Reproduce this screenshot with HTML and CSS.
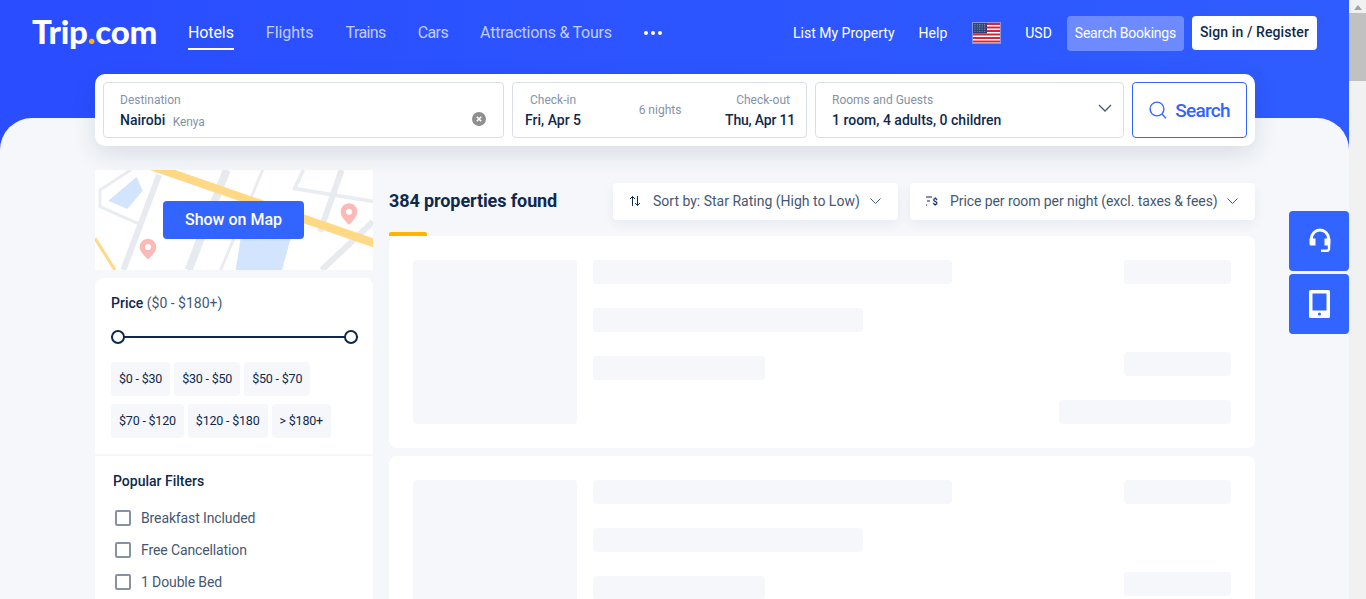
FILE: index.html
```html
<!DOCTYPE html>
<html lang="en">
<head>
    <meta charset="UTF-8">
    <meta name="viewport" content="width=device-width, initial-scale=1.0">
    <title>Trip.com Hotels</title>
    <link rel="stylesheet" href="styles.css">
</head>
<body>
<div id="page">
    <div id="main">
        <header id="hero">
            <div class="topbar">
                <a class="logo">Trip<span class="logo-dot">.</span>com</a>
                <nav class="nav">
                    <a class="nav-item active">Hotels</a>
                    <a class="nav-item nav-wide">Flights</a>
                    <a class="nav-item nav-tight">Trains</a>
                    <a class="nav-item nav-tight">Cars</a>
                    <a class="nav-item">Attractions &amp; Tours</a>
                    <span class="nav-more"><i></i><i></i><i></i></span>
                </nav>
                <div class="account">
                    <a class="account-link">List My Property</a>
                    <a class="account-link">Help</a>
                    <svg class="flag" viewBox="0 0 29 22" width="29" height="22">
                        <defs>
                            <pattern id="stars" width="2.4" height="2.2" patternUnits="userSpaceOnUse">
                                <rect width="1.100" height="1.100" fill="#8e93b8"/>
                            </pattern>
                        </defs>
                        <rect width="29" height="22" fill="#fff"/>
                        <rect y="1" width="29" height="2" fill="#d0293b"/>
                        <rect y="4.5" width="29" height="2" fill="#d0293b"/>
                        <rect y="8" width="29" height="2" fill="#d0293b"/>
                        <rect y="11.5" width="29" height="2" fill="#d0293b"/>
                        <rect y="15" width="29" height="2" fill="#d0293b"/>
                        <rect y="18.5" width="29" height="2" fill="#d0293b"/>
                        <rect x="0.5" y="0.5" width="14.500" height="11" fill="#2f3f72"/>
                        <rect x="1.500" y="1.500" width="12.500" height="9" fill="url(#stars)"/>
                        <rect x="0.5" y="0.5" width="28" height="21" fill="none" stroke="#8a93e0"/>
                    </svg>
                    <a class="account-link">USD</a>
                    <a class="btn-bookings">Search Bookings</a>
                    <a class="btn-signin">Sign in / Register</a>
                </div>
            </div>
            <form class="searchbox">
                <div class="field field-dest">
                    <span class="field-label">Destination</span>
                    <span class="field-value">Nairobi <small>Kenya</small></span>
                    <svg class="clear-icon" viewBox="0 0 14 14" width="14" height="14">
                        <circle cx="7" cy="7" r="7" fill="#8f8f8f"/>
                        <path d="M4.800 4.800l4.400 4.400M9.200 4.800l-4.400 4.400" stroke="#fff" stroke-width="1.600"/>
                    </svg>
                </div>
                <div class="field field-date">
                    <div class="date-col">
                        <span class="field-label">Check-in</span>
                        <span class="field-value">Fri, Apr 5</span>
                    </div>
                    <span class="nights">6 nights</span>
                    <div class="date-col date-end">
                        <span class="field-label">Check-out</span>
                        <span class="field-value">Thu, Apr 11</span>
                    </div>
                </div>
                <div class="field field-rooms">
                    <span class="field-label">Rooms and Guests</span>
                    <span class="field-value">1 room, 4 adults, 0 children</span>
                    <svg class="rooms-caret" viewBox="0 0 14 8" width="14" height="8">
                        <path d="M1 1l6 6 6-6" fill="none" stroke="#455873" stroke-width="1.300"/>
                    </svg>
                </div>
                <button class="btn-search" type="button">
                    <svg viewBox="0 0 18 18" width="18" height="18">
                        <circle cx="8" cy="8" r="6.900" fill="none" stroke="#3264ff" stroke-width="1.400"/>
                        <path d="M13 13l4 4.400" stroke="#3264ff" stroke-width="1.400"/>
                    </svg>
                    Search
                </button>
            </form>
        </header>

        <div id="sheet">
            <div class="layout">
                <aside class="sidebar">
                    <div class="map">
                        <svg class="map-art" viewBox="15 30 834 300" width="278" height="100">
                            <rect x="15" y="30" width="834" height="300" fill="#fff"/>
                            <path d="M122 30L30 90v50l122 54" fill="none" stroke="#e9ecf1" stroke-width="9"/>
                            <path d="M207 45L100 330" fill="none" stroke="#e7eaef" stroke-width="18"/>
                            <path d="M410 30L296 330" fill="none" stroke="#e7eaef" stroke-width="24"/>
                            <path d="M518 30L392 330" fill="none" stroke="#e9ecf1" stroke-width="9"/>
                            <path d="M640 30l-26 56 235 38" fill="none" stroke="#e9ecf1" stroke-width="11"/>
                            <path d="M755 30L690 215M849 185L695 330" fill="none" stroke="#e7eaef" stroke-width="18"/>
                            <path d="M55 122l85-72 18 42-46 55z" fill="#d3e4ff"/>
                            <path d="M452 235h150l-26 95H437z" fill="#d3e4ff"/>
                            <path d="M180 30h75l594 205v27z" fill="#ffd986"/>
                            <path d="M15 235l60 95" fill="none" stroke="#ffd986" stroke-width="9"/>
                            <path d="M777 130c-14 0-25 11-25 25 0 16 17 30 25 40 8-10 25-24 25-40 0-14-11-25-25-25z" fill="#fbbab5"/>
                            <circle cx="777" cy="155" r="9" fill="#fff"/>
                            <path d="M174 236c-14 0-25 11-25 25 0 16 17 28 25 38 8-10 25-22 25-38 0-14-11-25-25-25z" fill="#fbbab5"/>
                            <circle cx="174" cy="261" r="9" fill="#fff"/>
                        </svg>
                        <a class="btn-map">Show on Map</a>
                    </div>
                    <section class="price-box">
                        <p class="price-title"><b>Price</b> <span>($0 - $180+)</span></p>
                        <div class="slider"><i class="knob"></i><i class="knob"></i></div>
                        <div class="chips">
                            <span class="chip">$0 - $30</span>
                            <span class="chip">$30 - $50</span>
                            <span class="chip">$50 - $70</span>
                            <span class="chip">$70 - $120</span>
                            <span class="chip">$120 - $180</span>
                            <span class="chip">&gt; $180+</span>
                        </div>
                    </section>
                    <section class="filters">
                        <h3>Popular Filters</h3>
                        <label class="check"><i></i>Breakfast Included</label>
                        <label class="check"><i></i>Free Cancellation</label>
                        <label class="check"><i></i>1 Double Bed</label>
                    </section>
                </aside>

                <div class="results">
                    <div class="toolbar">
                        <h2>384 properties found</h2>
                        <div class="dropdown dropdown-sort">
                            <svg viewBox="0 0 12 12" width="12" height="12">
                                <path d="M3.500 11V1.500M1 4l2.500-2.500L6 4M8.500 1v9.500M6 8l2.500 2.500L11 8" fill="none" stroke="#0f294d"/>
                            </svg>
                            <span>Sort by: Star Rating (High to Low)</span>
                            <svg class="caret" viewBox="0 0 11 6" width="11" height="6">
                                <path d="M.5.5l5 5 5-5" fill="none" stroke="#455873"/>
                            </svg>
                        </div>
                        <div class="dropdown dropdown-price">
                            <svg viewBox="0 0 13 10" width="13" height="10">
                                <path d="M0 1h6M1 5h3M0 9h1" fill="none" stroke="#0f294d" stroke-width="1.200"/>
                                <text x="6.500" y="8.500" class="icon-dollar">$</text>
                            </svg>
                            <span>Price per room per night (excl. taxes &amp; fees)</span>
                            <svg class="caret" viewBox="0 0 11 6" width="11" height="6">
                                <path d="M.5.5l5 5 5-5" fill="none" stroke="#455873"/>
                            </svg>
                        </div>
                    </div>
                    <div class="accent"></div>
                    <div class="card">
                        <div class="sk sk-thumb"></div>
                        <div class="sk-lines">
                            <div class="sk sk-long"></div>
                            <div class="sk sk-mid"></div>
                            <div class="sk sk-short"></div>
                        </div>
                        <div class="sk-side">
                            <div class="sk sk-tag"></div>
                            <div class="sk sk-tag sk-tag-low"></div>
                            <div class="sk sk-wide"></div>
                        </div>
                    </div>
                    <div class="card">
                        <div class="sk sk-thumb"></div>
                        <div class="sk-lines">
                            <div class="sk sk-long"></div>
                            <div class="sk sk-mid"></div>
                            <div class="sk sk-short"></div>
                        </div>
                        <div class="sk-side">
                            <div class="sk sk-tag"></div>
                            <div class="sk sk-tag sk-tag-low"></div>
                            <div class="sk sk-wide"></div>
                        </div>
                    </div>
                </div>
            </div>
        </div>

        <div class="float-btns">
            <a class="float-btn">
                <svg viewBox="0 0 26 26" width="26" height="26">
                    <path d="M5.500 14v-3.500a8.500 8.500 0 0 1 17 0V14" fill="none" stroke="#fff" stroke-width="3"/>
                    <path d="M3.500 10.500h6v7H5a1.500 1.500 0 0 1-1.500-1.500zM18.500 10.500h6V16a1.500 1.500 0 0 1-1.500 1.500h-4.500z" fill="#fff"/>
                    <path d="M23 17v3.500c0 1.200-.8 2.200-2 2.200h-6" fill="none" stroke="#fff" stroke-width="2.400"/>
                </svg>
            </a>
            <a class="float-btn">
                <svg viewBox="0 0 22 28" width="22" height="28">
                    <rect x="1" y="0" width="21" height="28" rx="1.500" fill="#fff"/>
                    <rect x="4.500" y="3.500" width="14" height="17" fill="#3264ff"/>
                    <circle cx="11.500" cy="24" r="1.500" fill="#3264ff"/>
                </svg>
            </a>
        </div>
    </div>

    <div id="scrollbar">
        <span class="scroll-arrow"></span>
        <div class="scroll-thumb"></div>
    </div>
</div>
</body>
</html>
```

FILE: styles.css
```css
* {
    box-sizing: border-box;
}

html, body {
    margin: 0;
    padding: 0;
    height: 599px;
    overflow: hidden;
}

body {
    font-family: Roboto, "Noto Sans", Arial, sans-serif;
    color: #0f294d;
}

#page {
    display: flex;
    height: 599px;
}

#main {
    position: relative;
    width: 1349px;
    display: flex;
    flex-direction: column;
    background: linear-gradient(90deg, #2a4dff, #2f5cff);
}

#scrollbar {
    width: 17px;
    background: #f1f1f1;
}

.scroll-arrow {
    display: block;
    width: 0;
    margin: 5px auto 0;
    border: 4px solid transparent;
    border-top: 0;
    border-bottom: 5px solid #a3a3a3;
}

.scroll-thumb {
    height: 68px;
    margin-top: 3px;
    background: #c1c1c1;
}

/* header */
#hero {
    height: 118px;
    padding: 16px 32px 0;
    position: relative;
    z-index: 2;
}

.topbar {
    display: flex;
    align-items: flex-start;
    height: 35px;
}

.logo {
    width: 156px;
    margin-top: -3px;
    color: #fff;
    font-family: Lato, sans-serif;
    font-weight: 900;
    font-size: 33px;
    line-height: 36px;
    letter-spacing: -0.25px;
}

.logo-dot {
    color: #ffb400;
}

.nav {
    display: flex;
    align-items: center;
    gap: 32px;
    height: 34px;
}

.nav-item {
    position: relative;
    color: rgba(255, 255, 255, 0.72);
    font-size: 16px;
    line-height: 34px;
    letter-spacing: -0.25px;
}

.nav-wide {
    letter-spacing: -0.03px;
}

.nav-tight {
    letter-spacing: -0.6px;
}

.nav-item.active {
    color: #fff;
    letter-spacing: -0.1px;
}

.nav-item.active::after {
    content: "";
    position: absolute;
    left: 0;
    right: 0;
    bottom: 0;
    height: 2px;
    background: #fff;
}

.nav-more {
    display: flex;
    gap: 3px;
}

.nav-more i {
    width: 4px;
    height: 4px;
    border-radius: 50%;
    background: #fff;
}

.account {
    margin-left: auto;
    display: flex;
    align-items: flex-start;
    font-size: 14px;
}

.account-link {
    color: #fff;
    line-height: 34px;
}

.account-link + .account-link {
    margin-left: 24px;
}

.flag {
    margin: 6px 24px 0 25px;
}

.btn-bookings {
    margin-left: 15px;
    height: 35px;
    line-height: 34px;
    padding: 0 8px;
    border-radius: 4px;
    background: rgba(255, 255, 255, 0.3);
    color: #fff;
    letter-spacing: -0.22px;
}

.btn-signin {
    margin-left: 8px;
    height: 34px;
    line-height: 33px;
    padding: 0 8px;
    border-radius: 4px;
    background: #fff;
    color: #0f294d;
    font-weight: 500;
    letter-spacing: 0.1px;
}

/* search box */
.searchbox {
    display: flex;
    gap: 8px;
    width: 1160px;
    height: 72px;
    margin: 23px 0 0 63px;
    padding: 8px;
    border-radius: 10px;
    background: #fff;
    box-shadow: 0 8px 24px rgba(15, 41, 77, 0.12);
}

.field {
    position: relative;
    height: 56px;
    border: 1px solid #dadfe6;
    border-radius: 4px;
    background: #fff;
}

.field-dest,
.field-rooms {
    display: flex;
    flex-direction: column;
    padding: 9px 16px 0;
}

.field-dest {
    width: 401px;
}

.field-rooms {
    width: 309px;
}

.field-date {
    width: 295px;
    display: grid;
    grid-template-columns: 1fr auto 1fr;
    align-items: start;
    padding: 9px 11px 0 12px;
}

.field-label {
    display: block;
    color: #8592a6;
    font-size: 12px;
    line-height: 16px;
}

.field-value {
    display: block;
    margin-top: 2px;
    font-size: 14px;
    line-height: 20px;
    font-weight: 500;
}

.field-value small {
    margin-left: 4px;
    color: #8592a6;
    font-size: 12px;
    font-weight: 400;
    letter-spacing: -0.1px;
    vertical-align: -1px;
}

.date-col .field-label {
    padding-left: 5px;
}

.date-end {
    text-align: right;
}

.date-end .field-label {
    padding-right: 5px;
}

.date-end .field-value {
    letter-spacing: -0.2px;
}

.nights {
    margin-top: 10px;
    color: #8592a6;
    font-size: 12px;
    line-height: 16px;
}

.clear-icon {
    position: absolute;
    right: 17px;
    top: 29px;
}

.rooms-caret {
    position: absolute;
    right: 11px;
    top: 21px;
}

.btn-search {
    display: flex;
    align-items: center;
    justify-content: center;
    gap: 8px;
    width: 115px;
    height: 56px;
    padding: 0;
    border: 1px solid #3264ff;
    border-radius: 4px;
    background: #fff;
    color: #3264ff;
    font-family: inherit;
    font-size: 19px;
    font-weight: 500;
    letter-spacing: -0.75px;
}

/* page body */
#sheet {
    flex: 1;
    min-height: 0;
    overflow: hidden;
    background: #f5f7fa;
    border-radius: 32px 32px 0 0;
    padding-top: 52px;
}

.layout {
    display: flex;
    gap: 16px;
    width: 1160px;
    margin-left: 95px;
}

.sidebar {
    width: 278px;
    flex: none;
}

.map {
    position: relative;
    height: 100px;
}

.map-art {
    display: block;
}

.btn-map {
    position: absolute;
    left: 68px;
    top: 31px;
    width: 141px;
    height: 38px;
    border-radius: 4px;
    background: #3264ff;
    color: #fff;
    font-size: 16px;
    font-weight: 500;
    line-height: 38px;
    text-align: center;
}

.price-box {
    margin-top: 8px;
    height: 176px;
    padding: 16px 16px 0;
    background: #fff;
    border-radius: 8px 8px 0 0;
}

.price-title {
    margin: 0;
    font-size: 14px;
    line-height: 18px;
}

.price-title b {
    font-weight: 500;
}

.price-title span {
    color: #455873;
}

.slider {
    display: flex;
    justify-content: space-between;
    align-items: center;
    height: 14px;
    margin: 18px -1px 0 0;
    background: linear-gradient(#0f294d, #0f294d) center / 100% 2px no-repeat;
}

.knob {
    width: 14px;
    height: 14px;
    border: 2px solid #0f294d;
    border-radius: 50%;
    background: #fff;
}

.chips {
    display: flex;
    flex-wrap: wrap;
    gap: 8px 4px;
    margin-top: 18px;
}

.chip {
    height: 34px;
    padding: 0 8px;
    border-radius: 4px;
    background: #f5f7fa;
    color: #0f294d;
    font-size: 12.5px;
    line-height: 34px;
    letter-spacing: -0.2px;
}

.filters {
    margin-top: 2px;
    padding: 16px 18px 0;
    background: #fff;
    height: 200px;
}

.filters h3 {
    margin: 0 0 12px;
    font-size: 14px;
    font-weight: 500;
    line-height: 18px;
}

.check {
    display: flex;
    align-items: center;
    height: 32px;
    color: #455873;
    font-size: 14px;
    letter-spacing: -0.12px;
}

.check i {
    width: 16px;
    height: 16px;
    margin: 0 10px 0 2px;
    border: 2px solid #8592a6;
    border-radius: 2px;
    background: #fff;
}

.results {
    width: 866px;
}

.toolbar {
    display: flex;
    align-items: center;
    height: 37px;
    margin-top: 13px;
}

.toolbar h2 {
    margin: 0 auto 2px 0;
    font-size: 18px;
    font-weight: 700;
    letter-spacing: -0.1px;
}

.dropdown {
    display: flex;
    align-items: center;
    height: 37px;
    padding: 0 17px 1px 16px;
    border-radius: 4px;
    background: #fff;
    box-shadow: 0 4px 12px rgba(15, 41, 77, 0.06);
    color: #455873;
    font-size: 14px;
    white-space: nowrap;
}

.dropdown span {
    margin: 0 9px 0 12px;
}

.dropdown-sort {
    width: 285px;
}

.dropdown-price {
    width: 345px;
    margin-left: 12px;
}

.dropdown-price span {
    margin-left: 11px;
    letter-spacing: -0.08px;
}

.dropdown .caret {
    margin-left: auto;
}

.icon-dollar {
    font-size: 9px;
    font-weight: 700;
    fill: #0f294d;
}

.accent {
    width: 38px;
    height: 4px;
    margin-top: 12px;
    border-radius: 2px 2px 0 0;
    background: #ffb400;
}

.card {
    display: flex;
    gap: 16px;
    height: 212px;
    margin-bottom: 8px;
    padding: 24px;
    border-radius: 8px;
    background: #fff;
}

.sk {
    height: 24px;
    border-radius: 4px;
    background: #f5f7fa;
}

.sk-thumb {
    width: 164px;
    height: 164px;
    flex: none;
}

.sk-lines {
    flex: none;
    width: 359px;
    display: flex;
    flex-direction: column;
    gap: 24px;
}

.sk-mid {
    width: 270px;
}

.sk-short {
    width: 172px;
}

.sk-side {
    margin-left: auto;
    display: flex;
    flex-direction: column;
    align-items: flex-end;
    gap: 24px;
}

.sk-tag {
    width: 107px;
}

.sk-tag-low {
    margin-top: 44px;
}

.sk-wide {
    width: 172px;
}

/* floating helpers */
.float-btns {
    position: absolute;
    right: 0;
    top: 211px;
    z-index: 3;
    display: flex;
    flex-direction: column;
    gap: 3px;
}

.float-btn {
    display: flex;
    align-items: center;
    justify-content: center;
    width: 60px;
    height: 60px;
    border-radius: 4px;
    background: #3264ff;
}
```
